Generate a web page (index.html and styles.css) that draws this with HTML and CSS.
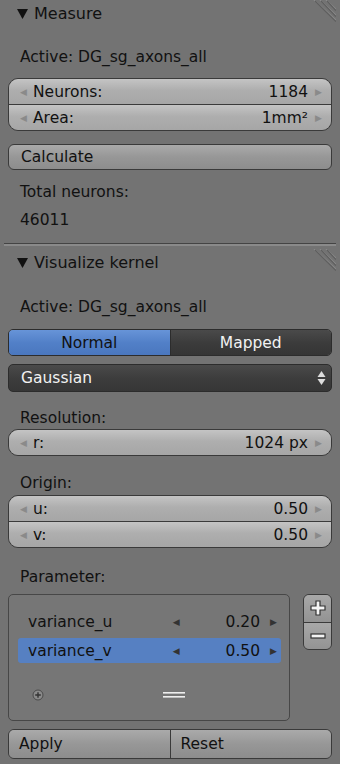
FILE: index.html
```html
<!DOCTYPE html>
<html>
<head>
<meta charset="utf-8">
<link rel="stylesheet" href="styles.css">
</head>
<body>
<div class="panel">
  <div class="hdr">
    <svg class="tri" width="11" height="10" viewBox="0 0 11 10"><polygon points="0,0 11,0 5.5,10" fill="#111"/></svg>
    <span>Measure</span>
    <svg class="grip" width="30" height="24" viewBox="0 0 30 24"><g stroke-width="1.2"><line x1="8" y1="0" x2="30" y2="20" stroke="#8a8a8a"/><line x1="14" y1="0" x2="30" y2="15" stroke="#8a8a8a"/><line x1="20" y1="0" x2="30" y2="9" stroke="#8a8a8a"/><line x1="9" y1="1" x2="30" y2="21.5" stroke="#5e5e5e"/><line x1="15" y1="1" x2="30" y2="16.5" stroke="#5e5e5e"/><line x1="21" y1="1" x2="30" y2="10.5" stroke="#5e5e5e"/></g></svg>
  </div>
  <div class="lbl m21">Active: DG_sg_axons_all</div>
  <div class="fgroup m11">
    <div class="num"><span class="al">&#9664;</span><span class="k">Neurons:</span><span class="v">1184</span><span class="ar">&#9654;</span></div>
    <div class="num"><span class="al">&#9664;</span><span class="k">Area:</span><span class="v">1mm²</span><span class="ar">&#9654;</span></div>
  </div>
  <div class="btn m13">Calculate</div>
  <div class="lbl m12">Total neurons:</div>
  <div class="lbl m8">46011</div>
</div>
<div class="sep"></div>
<div class="panel">
  <div class="hdr m3">
    <svg class="tri" width="11" height="10" viewBox="0 0 11 10"><polygon points="0,0 11,0 5.5,10" fill="#111"/></svg>
    <span>Visualize kernel</span>
    <svg class="grip" width="30" height="24" viewBox="0 0 30 24"><g stroke-width="1.2"><line x1="8" y1="0" x2="30" y2="20" stroke="#8a8a8a"/><line x1="14" y1="0" x2="30" y2="15" stroke="#8a8a8a"/><line x1="20" y1="0" x2="30" y2="9" stroke="#8a8a8a"/><line x1="9" y1="1" x2="30" y2="21.5" stroke="#5e5e5e"/><line x1="15" y1="1" x2="30" y2="16.5" stroke="#5e5e5e"/><line x1="21" y1="1" x2="30" y2="10.5" stroke="#5e5e5e"/></g></svg>
  </div>
  <div class="lbl m22">Active: DG_sg_axons_all</div>
  <div class="toggle m12">
    <div class="opt on">Normal</div>
    <div class="opt off">Mapped</div>
  </div>
  <div class="drop m8"><span>Gaussian</span>
    <svg width="9" height="16" viewBox="0 0 9 16"><polygon points="4.5,1 8.5,7 0.5,7" fill="#ddd"/><polygon points="0.5,9 8.5,9 4.5,15" fill="#ddd"/></svg>
  </div>
  <div class="lbl m16">Resolution:</div>
  <div class="fgroup single m1">
    <div class="num"><span class="al">&#9664;</span><span class="k">r:</span><span class="v">1024 px</span><span class="ar">&#9654;</span></div>
  </div>
  <div class="lbl m17">Origin:</div>
  <div class="fgroup m2">
    <div class="num"><span class="al">&#9664;</span><span class="k">u:</span><span class="v">0.50</span><span class="ar">&#9654;</span></div>
    <div class="num"><span class="al">&#9664;</span><span class="k">v:</span><span class="v">0.50</span><span class="ar">&#9654;</span></div>
  </div>
  <div class="lbl m19">Parameter:</div>
  <div class="listrow m7">
    <div class="list">
      <div class="item"><span class="k">variance_u</span><span class="lar">&#9664;</span><span class="v">0.20</span><span class="rar">&#9654;</span></div>
      <div class="item sel"><span class="k">variance_v</span><span class="lar">&#9664;</span><span class="v">0.50</span><span class="rar">&#9654;</span></div>
      <div class="lfoot">
        <svg width="12" height="12" viewBox="0 0 12 12"><circle cx="6" cy="6" r="5" fill="#8a8a8a" stroke="#4a4a4a" stroke-width="1"/><path d="M6 3.2v5.6M3.2 6h5.6" stroke="#333" stroke-width="1.4"/></svg>
        <svg class="eq" width="22" height="6" viewBox="0 0 22 6"><rect x="0" y="0" width="22" height="1.6" fill="#eee"/><rect x="0" y="4" width="22" height="1.6" fill="#eee"/></svg>
      </div>
    </div>
    <div class="pm">
      <div class="pmb"><svg width="18" height="18" viewBox="0 0 18 18"><path d="M7 2h4v5h5v4h-5v5H7v-5H2V7h5z" fill="#f4f4f4" stroke="#333" stroke-width="1.2"/></svg></div>
      <div class="pmb"><svg width="18" height="10" viewBox="0 0 18 10"><rect x="2" y="3" width="14" height="4" fill="#f4f4f4" stroke="#333" stroke-width="1.2"/></svg></div>
    </div>
  </div>
  <div class="pair m8">
    <div class="pb">Apply</div>
    <div class="pb">Reset</div>
  </div>
</div>
</body>
</html>
```
FILE: styles.css
```css
html, body {
  margin: 0;
  padding: 0;
}
body {
  width: 340px;
  height: 764px;
  overflow: hidden;
  background: #737373;
  font-family: "DejaVu Sans", sans-serif;
  font-size: 15.5px;
  color: #111;
}
.panel {
  padding: 0 8px;
}
.hdr {
  height: 26px;
  display: flex;
  align-items: center;
  gap: 6px;
  padding-left: 9px;
  font-size: 16px;
  position: relative;
}
.hdr .tri { margin-top: 1px; }
.hdr .grip {
  position: absolute;
  right: -4px;
  top: 0;
}
.lbl {
  height: 20px;
  line-height: 20px;
  padding-left: 12px;
}
.m1 { margin-top: 1px; }
.m2 { margin-top: 2px; }
.m3 { margin-top: 3px; }
.m7 { margin-top: 7px; }
.m8 { margin-top: 8px; }
.m11 { margin-top: 11px; }
.m12 { margin-top: 12px; }
.m13 { margin-top: 13px; }
.m16 { margin-top: 16px; }
.m17 { margin-top: 17px; }
.m19 { margin-top: 19px; }
.m21 { margin-top: 21px; }
.m22 { margin-top: 22px; }

.fgroup {
  border: 1px solid #3a3a3a;
  border-radius: 10px;
  overflow: hidden;
  display: flex;
  flex-direction: column;
}
.num {
  height: 25px;
  display: flex;
  align-items: center;
  background: linear-gradient(#c4c4c4, #aeaeae 45%, #a6a6a6);
  padding: 0 8px 0 11px;
}
.num + .num { border-top: 1px solid #3a3a3a; }
.num .al, .num .ar {
  font-size: 9px;
  color: #8a8a8a;
  width: 8px;
}
.num .k { margin-left: 5px; flex: 1; }
.num .v { margin-right: 7px; }

.btn {
  height: 24px;
  line-height: 24px;
  border: 1px solid #3a3a3a;
  border-radius: 6px;
  background: linear-gradient(#aaaaaa, #979797 50%, #8d8d8d);
  padding-left: 12px;
}

.sep {
  margin: 13px 4px 0;
  height: 1px;
  background: #444;
  border-bottom: 2px solid #8a8a8a;
}

.toggle {
  display: flex;
  height: 25px;
  border: 1px solid #2c2c2c;
  border-radius: 5px;
  overflow: hidden;
}
.opt {
  flex: 1;
  display: flex;
  align-items: center;
  justify-content: center;
}
.opt.on {
  background: linear-gradient(#6794d8, #5280c8 50%, #4a77be);
  color: #111;
  border-right: 1px solid #2c2c2c;
}
.opt.off {
  background: linear-gradient(#4a4a4a, #3c3c3c 50%, #353535);
  color: #f2f2f2;
}
.drop {
  height: 26px;
  border: 1px solid #2c2c2c;
  border-radius: 5px;
  background: linear-gradient(#4a4a4a, #3d3d3d 50%, #363636);
  color: #f2f2f2;
  display: flex;
  align-items: center;
  justify-content: space-between;
  padding: 0 5px 0 12px;
}

.listrow {
  display: flex;
  gap: 13px;
  align-items: flex-start;
}
.list {
  flex: 1;
  height: 127px;
  border: 1px solid #474747;
  border-radius: 5px;
  background: #767676;
  padding: 14px 8px 0 9px;
  display: flex;
  flex-direction: column;
  gap: 4px;
  box-sizing: border-box;
}
.item {
  height: 25px;
  display: flex;
  align-items: center;
  padding: 0 4px 0 10px;
  border-radius: 3px;
}
.item.sel { background: #5680c2; }
.item .k { flex: 1; }
.item .lar, .item .rar {
  font-size: 9px;
  color: #333;
}
.item .lar { margin-right: 46px; }
.item .v { margin-right: 10px; }
.lfoot {
  margin-top: 21px;
  display: flex;
  align-items: center;
  padding-left: 14px;
  height: 14px;
}
.lfoot .eq { margin-left: 119px; }
.pm {
  width: 27px;
  height: 54px;
  border: 1px solid #3a3a3a;
  border-radius: 6px;
  overflow: hidden;
  display: flex;
  flex-direction: column;
}
.pmb {
  flex: 1;
  display: flex;
  align-items: center;
  justify-content: center;
  background: linear-gradient(#a8a8a8, #939393);
}
.pmb + .pmb { border-top: 1px solid #3a3a3a; }
.pair {
  display: flex;
  height: 28px;
  border: 1px solid #3a3a3a;
  border-radius: 6px;
  overflow: hidden;
}
.pb {
  flex: 1;
  display: flex;
  align-items: center;
  padding-left: 10px;
  background: linear-gradient(#aaaaaa, #979797 50%, #8d8d8d);
}
.pb + .pb { border-left: 1px solid #3a3a3a; }
```
